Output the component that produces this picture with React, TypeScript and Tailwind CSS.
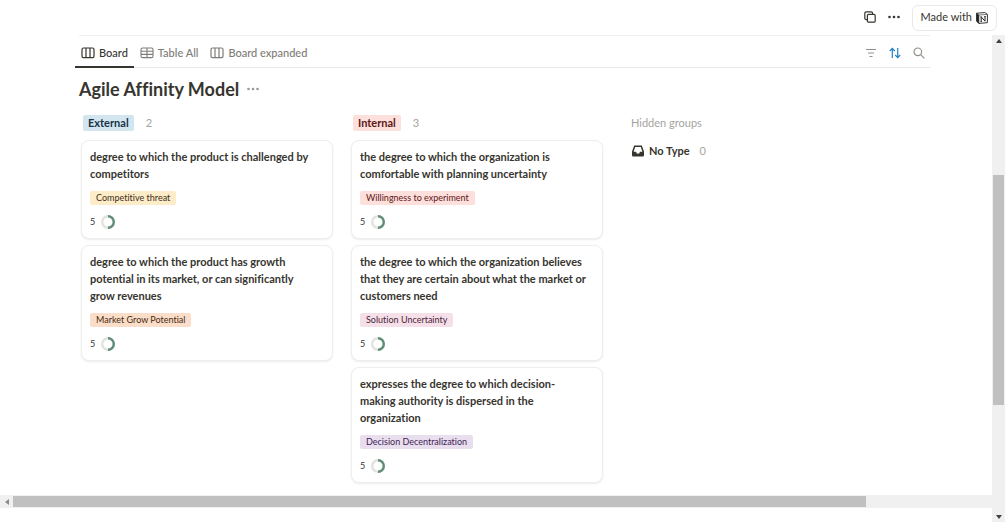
import type { ReactNode } from "react";

type Card = { text: string; tag: string; tagClass: string; score: number };
type Group = { name: string; nameClass: string; cards: Card[] };

const groups: Group[] = [
  {
    name: "External",
    nameClass: "bg-[#d3e5ef] text-[#183347]",
    cards: [
      {
        text: "degree to which the product is challenged by competitors",
        tag: "Competitive threat",
        tagClass: "bg-[#fdecc8] text-[#402c1b]",
        score: 5,
      },
      {
        text: "degree to which the product has growth potential in its market, or can significantly grow revenues",
        tag: "Market Grow Potential",
        tagClass: "bg-[#fadec9] text-[#49290e]",
        score: 5,
      },
    ],
  },
  {
    name: "Internal",
    nameClass: "bg-[#fddfdc] text-[#5d1715]",
    cards: [
      {
        text: "the degree to which the organization is comfortable with planning uncertainty",
        tag: "Willingness to experiment",
        tagClass: "bg-[#fddfdc] text-[#5d1715]",
        score: 5,
      },
      {
        text: "the degree to which the organization believes that they are certain about what the market or customers need",
        tag: "Solution Uncertainty",
        tagClass: "bg-[#f5e0e9] text-[#4c2337]",
        score: 5,
      },
      {
        text: "expresses the degree to which decision-making authority is dispersed in the organization",
        tag: "Decision Decentralization",
        tagClass: "bg-[#e8deee] text-[#412454]",
        score: 5,
      },
    ],
  },
];

function BoardIcon() {
  return (
    <svg viewBox="0 0 14 12" className="h-3 w-3.5" fill="none" stroke="currentColor" strokeWidth="1.2">
      <rect x="1" y="1" width="12" height="9.6" rx="1.4" />
      <path d="M5 1v9.6M9 1v9.6" />
    </svg>
  );
}

function TableIcon() {
  return (
    <svg viewBox="0 0 14 12" className="h-3 w-3.5" fill="none" stroke="currentColor" strokeWidth="1.1">
      <rect x="1" y="1" width="12" height="9.6" rx="1.4" />
      <path d="M1 4.2h12M1 7.4h12M7 1v9.6" />
    </svg>
  );
}

function Dots({ className }: { className: string }) {
  return (
    <svg viewBox="0 0 12 4" className={className} fill="currentColor">
      <circle cx="1.5" cy="2" r="1.3" />
      <circle cx="6" cy="2" r="1.3" />
      <circle cx="10.5" cy="2" r="1.3" />
    </svg>
  );
}

function NotionLogo() {
  return (
    <svg viewBox="0 0 12 12" className="h-3 w-3">
      <path d="M.7 1.2 8.9.6 11.4 2.4v8.3l-8.6.7L.7 9z" fill="#fff" stroke="#222" strokeWidth=".9" strokeLinejoin="round" />
      <path d="M.7 1.2 2.9 3v8.4L.7 9zM2.9 3l8.5-.6" fill="#222" stroke="#222" strokeWidth=".6" />
      <path d="M5.2 9.5V4.8l3.8 4.4V4.5M4.5 4.8h1M8.3 4.5h1.4M4.6 9.5h1.3" fill="none" stroke="#222" strokeWidth="1" />
    </svg>
  );
}

function Tab({ icon, label, active }: { icon: ReactNode; label: string; active?: boolean }) {
  return (
    <button
      type="button"
      className={
        active
          ? "flex items-center gap-1 border-b-2 border-[#37352f] px-1.5 pt-1 font-medium text-[#37352f]"
          : "flex items-center gap-1 border-b-2 border-transparent px-1.5 pt-1 font-medium text-[#7d7c78]"
      }
    >
      {icon}
      {label}
    </button>
  );
}

function Ring() {
  return (
    <svg viewBox="0 0 14 14" className="h-3.5 w-3.5" fill="none" strokeWidth="2.4">
      <circle cx="7" cy="7" r="5.8" stroke="#e3e2e0" />
      <path d="M7 1.2a5.8 5.8 0 0 1 0 11.6" stroke="#5f8f78" />
    </svg>
  );
}

function BoardCard({ card }: { card: Card }) {
  return (
    <a
      href="#card"
      className="block rounded-lg border border-[#eeeeed] bg-white pt-[7px] pr-3.5 pb-[9px] pl-2 shadow-[0_1px_2px_rgba(15,15,15,0.08)]"
    >
      <p className="leading-[17px] font-bold text-[#37352f]">{card.text}</p>
      <div className="mt-[9px] flex">
        <span className={`rounded-[2px] px-1.5 text-[9px] leading-[14px] ${card.tagClass}`}>{card.tag}</span>
      </div>
      <div className="mt-2.5 flex items-center gap-1.5 text-[9px] leading-[14px] text-[#37352f]">
        {card.score}
        <Ring />
      </div>
    </a>
  );
}

export default function App() {
  return (
    <div className="flex min-h-screen flex-col bg-white font-[Lato,sans-serif] text-[11px] text-[#37352f] [font-variant-ligatures:none]">
      {/* Top bar */}
      <header className="flex h-[35px] items-center justify-end pr-2">
        <button type="button" aria-label="Duplicate" className="mr-3 pb-0.5">
          <svg viewBox="0 0 12 12" className="h-3 w-3" fill="none" stroke="currentColor" strokeWidth="1.2">
            <rect x="3.4" y="3.4" width="7.8" height="7.8" rx="1.3" />
            <path d="M3.4 8.6H2.2A1.4 1.4 0 0 1 .8 7.2v-5A1.4 1.4 0 0 1 2.2.8h5a1.4 1.4 0 0 1 1.4 1.4v1.2" />
          </svg>
        </button>
        <button type="button" aria-label="More" className="mr-3 pb-0.5">
          <Dots className="h-1 w-3" />
        </button>
        <button type="button" className="flex h-[26px] items-center gap-1 rounded-md border border-[#e9e9e8] px-2">
          Made with
          <NotionLogo />
        </button>
      </header>

      <div className="flex flex-1">
        <div className="flex min-w-0 flex-1 flex-col">
          <main className="flex-1 pr-[62px] pb-3 pl-[75px]">
            {/* View tabs */}
            <div className="ml-1 border-t border-[#efefee]" />
            <div className="flex h-8 justify-between border-b border-[#e9e9e7]">
              <div className="-mb-px flex">
                <Tab icon={<BoardIcon />} label="Board" active />
                <Tab icon={<TableIcon />} label="Table All" />
                <Tab icon={<BoardIcon />} label="Board expanded" />
              </div>
              <div className="flex items-center gap-3 pt-0.5 pr-[5px] text-[#91918e]">
                <button type="button" aria-label="Filter">
                  <svg viewBox="0 0 12 12" className="h-3 w-3" stroke="currentColor" strokeWidth="1.1">
                    <path d="M1 2.5h10M3 6h6M4.5 9.5h3" />
                  </svg>
                </button>
                <button type="button" aria-label="Sort" className="text-[#2383c2]">
                  <svg viewBox="0 0 12 12" className="h-3 w-3" fill="none" stroke="currentColor" strokeWidth="1.2">
                    <path d="M3.3 11V1.5M.8 4l2.5-2.6L5.8 4M8.7 1v9.5M6.2 8l2.5 2.6L11.2 8" />
                  </svg>
                </button>
                <button type="button" aria-label="Search">
                  <svg viewBox="0 0 12 12" className="h-3 w-3" fill="none" stroke="currentColor" strokeWidth="1.2">
                    <circle cx="4.8" cy="4.8" r="3.8" />
                    <path d="m7.6 7.6 3.8 3.8" />
                  </svg>
                </button>
              </div>
            </div>

            <div className="flex h-[42px] items-center gap-2 pl-1">
              <h1 className="text-lg font-bold">Agile Affinity Model</h1>
              <button type="button" aria-label="View options" className="text-[#9b9a97]">
                <Dots className="h-1 w-3" />
              </button>
            </div>

            {/* Board */}
            <div className="flex items-start gap-[18px] pl-1.5">
              {groups.map((group) => (
                <section key={group.name} className="w-[252px] shrink-0">
                  <div className="flex h-[26px] items-center gap-3 pl-0.5">
                    <h2 className={`rounded-[2px] px-[5px] leading-4 font-bold ${group.nameClass}`}>
                      {group.name}
                    </h2>
                    <span className="text-[#a5a4a1]">{group.cards.length}</span>
                  </div>
                  <div className="mt-1 flex flex-col gap-1.5">
                    {group.cards.map((card) => (
                      <BoardCard key={card.tag} card={card} />
                    ))}
                  </div>
                </section>
              ))}
              <section className="pl-2.5">
                <h2 className="flex h-[26px] items-center text-[#a5a4a1]">Hidden groups</h2>
                <button type="button" className="flex h-[30px] items-center gap-1 font-bold">
                  <svg viewBox="0 0 14 12" className="h-3 w-3.5" fill="currentColor" fillRule="evenodd">
                    <path d="M3.2.5h7.6L13 6.4v4a1.1 1.1 0 0 1-1.1 1.1H2.1A1.1 1.1 0 0 1 1 10.4v-4zM4.2 2 2.6 6.8h2.5a1.9 1.9 0 0 0 3.8 0h2.5L9.8 2z" />
                  </svg>
                  No Type
                  <span className="ml-1.5 font-normal text-[#a5a4a1]">0</span>
                </button>
              </section>
            </div>
          </main>

          {/* Horizontal scrollbar */}
          <div className="mb-[15px] flex h-[13px] items-center bg-[#f0f0f0]">
            <div className="flex w-[13px] justify-center">
              <svg viewBox="0 0 4 6" className="h-1.5 w-1" fill="#8a8a8a">
                <path d="M4 0v6L0 3z" />
              </svg>
            </div>
            <div className="h-[11px] w-[86%] bg-[#c0c0c0]" />
          </div>
        </div>

        {/* Vertical scrollbar */}
        <div className="flex w-[13px] flex-col items-center justify-between bg-[#f0f0f0]">
          <svg viewBox="0 0 6 4" className="mt-1 h-1 w-1.5" fill="#404040">
            <path d="M0 4h6L3 0z" />
          </svg>
          <div className="flex w-full flex-1 flex-col items-center">
            <div className="grow-[131]" />
            <div className="w-[11px] grow-[229] bg-[#c0c0c0]" />
            <div className="grow-[109]" />
          </div>
          <svg viewBox="0 0 6 4" className="mb-1 h-1 w-1.5" fill="#404040">
            <path d="M0 0h6L3 4z" />
          </svg>
        </div>
      </div>
    </div>
  );
}
